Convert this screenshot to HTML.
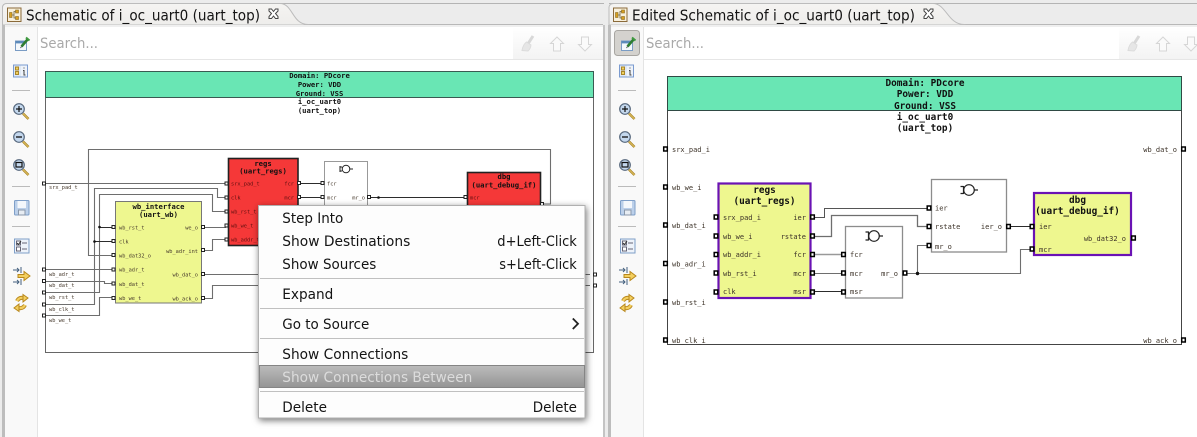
<!DOCTYPE html>
<html><head><meta charset="utf-8"><title>Schematic</title>
<style>
html,body{margin:0;padding:0;width:1197px;height:437px;overflow:hidden;background:#ececec}
svg{display:block}
.t{font-family:"DejaVu Sans","Liberation Sans",sans-serif;fill:#141414}
.b{font-family:"DejaVu Sans Mono","Liberation Mono",monospace;font-weight:bold;fill:#111;text-anchor:middle}
.s{font-family:"DejaVu Sans Mono","Liberation Mono",monospace;font-size:5.3px;fill:#46392c}
.r{font-family:"DejaVu Sans Mono","Liberation Mono",monospace;font-size:7px;fill:#3c3228}
.e{text-anchor:end}
.h{font-size:7.2px}.H{font-size:9.4px}
.w{fill:none;stroke:#6e6e6e;stroke-width:1.1}
.d{fill:none;stroke:#2c2c2c;stroke-width:1}
.g{fill:none;stroke:#999;stroke-width:1.6}
</style></head><body>
<svg xmlns="http://www.w3.org/2000/svg" width="1197" height="437" viewBox="0 0 1197 437">
<defs>
<linearGradient id="hl" x1="0" y1="0" x2="0" y2="1"><stop offset="0" stop-color="#bcbcbc"/><stop offset="1" stop-color="#949494"/></linearGradient>
<linearGradient id="tb" x1="0" y1="0" x2="0" y2="1"><stop offset="0" stop-color="#fff"/><stop offset="1" stop-color="#f3f3f3"/></linearGradient>
<linearGradient id="tab" x1="0" y1="0" x2="0" y2="1"><stop offset="0" stop-color="#f5f4f2"/><stop offset="1" stop-color="#eeedeb"/></linearGradient>
<filter id="sh" x="-10%" y="-10%" width="120%" height="125%"><feDropShadow dx="1" dy="2" stdDeviation="3.5" flood-color="#000" flood-opacity=".55"/></filter>

<g id="p"><rect x="-1.5" y="-1.5" width="3" height="3" fill="#fff" stroke="#222" stroke-width="1"/></g>
<g id="q"><rect x="-1.8" y="-2" width="3.6" height="4" fill="#fff" stroke="#000" stroke-width="1.5"/></g>

<g id="x"><path d="M-4.5-5 L-2-5 L0-2.5 L2-5 L4.5-5 L4.5-3 L2-.5 L4.5 2.5 L4.5 4.5 L2 4.5 L0 2 L-2 4.5 L-4.5 4.5 L-4.5 2.5 L-2-.5 L-4.5-3 Z" fill="#fff" stroke="#444" stroke-width="1"/></g>
<g id="ti"><rect x=".5" y=".5" width="13.500" height="13.500" fill="#f8f0dc" stroke="#8a6a3a"/><rect x="2.500" y="5" width="2.500" height="5" fill="#d8a020" stroke="#8a6a20" stroke-width=".6"/><rect x="8.500" y="2.500" width="3" height="3" fill="#d8a020" stroke="#8a6a20" stroke-width=".6"/><rect x="8.500" y="9" width="3" height="3" fill="#d8a020" stroke="#8a6a20" stroke-width=".6"/><path d="M5 7.500 H7 V4 H8.500 M7 7.500 V10.500 H8.500" stroke="#6a6040" fill="none" stroke-width=".8"/></g>
<g id="ed"><rect x="-6" y="-2.5" width="11" height="9.5" fill="#f4f8fc" stroke="#7a9cc4"/><rect x="-6" y="-2.5" width="11" height="2.4" fill="#5c8aba"/><path d="M0 3 L6-4" stroke="#2f7d32" stroke-width="2.6"/><path d="M4.5-6 L8-3" stroke="#3f9a3f" stroke-width="2"/><path d="M0 3 L-1 4.500" stroke="#555"/></g>
<g id="in"><rect x="-7.500" y="-6" width="14" height="12" fill="#eef3fa" stroke="#7b9bd0"/><rect x="-7" y="-5.500" width="7" height="11" fill="#dfe8f5"/><rect x="-5.500" y="-4" width="3" height="3" fill="#f0d060" stroke="#a8862a"/><rect x="-5.500" y=".5" width="3" height="3" fill="#f0d060" stroke="#a8862a"/><path d="M3-3.500 V-2.500 M2 -.5 H3 V4 H4.500" stroke="#444" fill="none"/></g>
<g id="zb"><path d="M3 3.500 L8.500 9" stroke="#a8862a" stroke-width="2.600"/><path d="M3 3.500 L8.500 9" stroke="#e0c060" stroke-width="1"/><circle cx="-1" cy="-1" r="5.300" fill="#c4d8ee" stroke="#56677c" stroke-width="1.200"/></g>
<g id="sv"><rect x="-7.500" y="-7.500" width="14.500" height="14.500" rx="1" fill="#bcd0ea" stroke="#7f9fc8"/><rect x="-4.500" y="-7" width="8.500" height="7" fill="#f4f7fb"/><rect x="-3.500" y="2" width="6.500" height="5" fill="#e8edf3" stroke="#8a98aa"/></g>
<g id="ls"><rect x="-7.500" y="-7" width="14.500" height="14" fill="#eef3fa" stroke="#7f9fc8"/><rect x="-5.500" y="-5" width="4" height="4" fill="#fff" stroke="#667"/><rect x="-5.500" y="1" width="4" height="4" fill="#fff" stroke="#667"/><path d="M-5-3 L-3.500-1.500 L-1-5" stroke="#333" fill="none"/><path d="M0-3 H5 M0 3 H5" stroke="#667"/></g>
<g id="ar"><path d="M-8-6 H-2 M-4-8 L-2-6 L-4-4 M0-9 V-3 M-8 6 H-2 M-4 4 L-2 6 L-4 8 M0 3 V9" stroke="#44607e" fill="none"/><path d="M-3-1.500 H3 V-4.500 L9 0 L3 4.500 V1.500 H-3 Z" fill="#f3cf5f" stroke="#b8871c"/></g>
<g id="sy"><path d="M-4-2 Q-2-6 3-5 M4 2 Q2 6 -3 5" fill="none" stroke="#b8871c" stroke-width="4"/><path d="M-4-2 Q-2-6 3-5 M4 2 Q2 6 -3 5" fill="none" stroke="#f3cf5f" stroke-width="2.200"/><path d="M2-8.500 L7-5 L2-1 Z M-2 8.500 L-7 5 L-2 1 Z" fill="#f3cf5f" stroke="#b8871c"/></g>
<g id="br"><path d="M-6 7.500 Q-5 1.500 -1.500-1 L3 2 Q2.500 6 0 8 Z" fill="#e6e6e6" stroke="#dcdcdc"/><path d="M.5 0 L5-7" stroke="#d8d8d8" stroke-width="3"/></g>
<g id="up"><path d="M0-7 L6.500-.5 L3.500-.5 L3.500 7 L-3.500 7 L-3.500-.5 L-6.500-.5 Z" fill="#fafafa" stroke="#d6d6d6"/></g>
<g id="dn"><path d="M0 7 L6.500 .5 L3.500 .5 L3.500-7 L-3.500-7 L-3.500 .5 L-6.500 .5 Z" fill="#fafafa" stroke="#d6d6d6"/></g>
</defs>

<!-- window bg -->
<rect width="1197" height="437" fill="#ececec"/>

<!-- LEFT PANE -->
<path d="M2.500 8 Q2.500 3.500 7 3.500 H604" fill="none" stroke="#b4b4b4"/>
<path d="M3 24.500 H603" stroke="#b8b8b8"/>
<path d="M2.500 25 V8 Q2.500 3.500 7 3.500 H280 C293 3.500 292 24.500 308 24.500 H309 V25 H2.500 Z" fill="url(#tab)" stroke="#bcbcbc"/>
<rect x="5" y="25" width="598" height="2" fill="#efefef"/>
<rect x="5" y="27" width="598" height="410" fill="#fff"/>
<rect x="2" y="25" width="3" height="412" fill="#bdbdbd"/>
<rect x="5" y="27" width="32" height="410" fill="#f9f9f9"/>
<rect x="37" y="27" width="1" height="410" fill="#e4e4e4"/>
<rect x="603" y="25" width="2" height="412" fill="#c4c4c4"/>
<rect x="513" y="27" width="90" height="32" fill="url(#tb)"/>
<rect x="38" y="59" width="565" height="1" fill="#e6e6e6"/>
<use href="#ti" x="7" y="7.500"/>
<text class="t" x="26" y="20.500" font-size="15" textLength="234" lengthAdjust="spacingAndGlyphs">Schematic of i_oc_uart0 (uart_top)</text>
<use href="#x" x="273.500" y="14"/>
<text class="t" style="fill:#a9a9a9" x="40" y="48" font-size="14.500" textLength="58" lengthAdjust="spacingAndGlyphs">Search...</text>
<use href="#br" x="528" y="43"/><use href="#up" x="557" y="44"/><use href="#dn" x="585" y="44"/>

<use href="#ed" x="21.500" y="43.500"/><use href="#in" x="21" y="71"/>
<rect x="12" y="90" width="18" height="1" fill="#bbb"/>
<use href="#zb" x="20" y="110"/><path d="M16 109 H22 M19 106 V112" stroke="#111" stroke-width="1.200"/>
<use href="#zb" x="20" y="138"/><path d="M16 137 H22" stroke="#111" stroke-width="1.300"/>
<use href="#zb" x="20" y="166"/><rect x="16" y="162.500" width="6" height="4.500" fill="none" stroke="#111" stroke-width="1.200"/>
<rect x="12" y="186" width="18" height="1" fill="#bbb"/>
<use href="#sv" x="22" y="208"/>
<rect x="12" y="226" width="18" height="1" fill="#bbb"/>
<use href="#ls" x="22" y="246"/>
<use href="#ar" x="21" y="276"/>
<use href="#sy" x="21" y="303"/>

<!-- left schematic -->
<rect x="45.500" y="71.500" width="548" height="281" fill="#fff" stroke="#666"/>
<rect x="45.500" y="71.500" width="548" height="26" fill="#69e6b4" stroke="#3a5a52"/>
<g class="b h">
<text class="b h" x="319.500" y="78">Domain: PDcore</text>
<text class="b h" x="319.500" y="87">Power: VDD</text>
<text class="b h" x="319.500" y="96">Ground: VSS</text>
<text class="b h" x="319.500" y="104">i_oc_uart0</text>
<text class="b h" x="319.500" y="113">(uart_top)</text>
</g>
<path class="w" d="M112 255.500 H88.500 V149.500 H550.500 V204 H543"/>
<path class="w" d="M46 183.500 H226"/>
<path class="w" d="M46 304.500 H94.500 V188.500 H217.500 V197.500 H226"/>
<path class="w" d="M46 292.500 H99.500 V194.500 H212.500 V211.500 H226"/>
<path class="w" d="M46 315.500 H99.500 V297.500 H112"/>
<path class="w" d="M46 281.500 H104.500 V283.500 H112"/>
<path class="w" d="M46 269.500 H112"/>
<path class="d" d="M99.500 227.500 H112 M94.500 241.500 H112"/>
<circle cx="99.500" cy="227" r="1.300" fill="#111"/><circle cx="94.500" cy="241.500" r="1.300" fill="#111"/>
<path class="w" d="M203 227.500 H226 M203 250.500 H212.500 V239.500 H226 M203 274.500 H590 M203 298.500 H212.500 V285.500 H590"/>
<path class="d" d="M300 183.500 H322 M300 197.500 H322 M370 197.500 H465"/>
<circle cx="378.500" cy="197.500" r="1.300" fill="#111"/>

<rect x="228.500" y="158.500" width="69.500" height="87" fill="#f53838" stroke="#222" stroke-width="1.600"/>
<text class="b" font-size="7.200" x="263" y="166">regs</text><text class="b" font-size="7.200" x="263" y="173.500">(uart_regs)</text>
<g class="s" style="fill:#5c1010">
<text x="231" y="185.500">srx_pad_t</text><text x="231" y="199.500">clk</text><text x="231" y="213.500">wb_rst_t</text><text x="231" y="227.500">wb_we_t</text><text x="231" y="241.500">wb_addr_t</text>
<text x="294" y="185.500" class="e">fcr</text><text x="294" y="199.500" class="e">mcr</text>
</g>
<rect x="115.500" y="201.500" width="86" height="101.500" fill="#eef78f" stroke="#777"/>
<text class="b" font-size="7.200" x="158.500" y="209">wb_interface</text><text class="b" font-size="7.200" x="158.500" y="217">(uart_wb)</text>
<g class="s">
<text x="119" y="229.500">wb_rst_t</text><text x="119" y="243.500">clk</text><text x="119" y="257.500">wb_dat32_o</text><text x="119" y="271.500">wb_adr_t</text><text x="119" y="286">wb_dat_t</text><text x="119" y="300">wb_we_t</text>
<text x="198" y="229.500" class="e">we_o</text><text x="198" y="253" class="e">wb_adr_int</text><text x="198" y="276.500" class="e">wb_dat_o</text><text x="198" y="300.500" class="e">wb_ack_o</text>
<text x="49" y="189">srx_pad_t</text><text x="49" y="276">wb_adr_t</text><text x="49" y="287">wb_dat_t</text><text x="49" y="299">wb_rst_t</text><text x="49" y="311">wb_clk_t</text><text x="49" y="322">wb_we_t</text>
</g>
<rect x="324.500" y="161.500" width="43" height="60" fill="#fff" stroke="#999"/>
<circle cx="346" cy="169" r="3.800" fill="#fff" stroke="#222"/><path d="M340 167 H342 M340 171 H342 M350 169 H353 M340 166 V172" stroke="#222" fill="none"/>
<g class="s"><text x="327" y="185.500">fcr</text><text x="327" y="199.500">mcr</text><text x="365" y="199.500" class="e">mr_o</text></g>
<rect x="467.500" y="172.500" width="73" height="50" fill="#f53838" stroke="#222" stroke-width="1.600"/>
<text class="b" font-size="7.200" x="504" y="179">dbg</text><text class="b" font-size="7.200" x="504" y="187.500">(uart_debug_if)</text>
<text class="s" style="fill:#5c1010" x="470" y="199.500">mcr</text>
<g fill="#fff">
<use href="#p" x="44" y="183.500"/><use href="#p" x="44" y="269.500"/><use href="#p" x="44" y="281"/><use href="#p" x="44" y="292.500"/><use href="#p" x="44" y="304.500"/><use href="#p" x="44" y="315.500"/>
<use href="#p" x="226.500" y="183.500"/><use href="#p" x="226.500" y="197.500"/><use href="#p" x="226.500" y="211.500"/><use href="#p" x="226.500" y="225.500"/><use href="#p" x="226.500" y="239.500"/>
<use href="#p" x="299" y="183"/><use href="#p" x="299" y="197"/>
<use href="#p" x="322.500" y="183"/><use href="#p" x="322.500" y="197"/><use href="#p" x="369" y="197"/>
<use href="#p" x="465.500" y="197"/><use href="#p" x="542" y="204"/>
<use href="#p" x="113.500" y="227"/><use href="#p" x="113.500" y="241"/><use href="#p" x="113.500" y="255"/><use href="#p" x="113.500" y="269.500"/><use href="#p" x="113.500" y="283.500"/><use href="#p" x="113.500" y="298"/>
<use href="#p" x="203" y="227"/><use href="#p" x="203" y="250"/><use href="#p" x="203" y="274"/><use href="#p" x="203" y="298"/>
<use href="#p" x="595" y="274.500"/><use href="#p" x="595" y="285.500"/>
</g>

<!-- RIGHT PANE -->
<path d="M609 3.500 H1197" stroke="#b4b4b4"/>
<path d="M609 24.500 H1197" stroke="#b8b8b8"/>
<path d="M609 25 V8 Q609 3.500 614 3.500 H933 C946 3.500 948 24.500 964 24.500 H965 V25 H609 Z" fill="url(#tab)" stroke="#bcbcbc"/>
<rect x="611" y="25" width="586" height="2" fill="#efefef"/>
<rect x="611" y="27" width="586" height="410" fill="#fff"/>
<rect x="608" y="25" width="3" height="412" fill="#bdbdbd"/>
<rect x="611" y="27" width="32" height="410" fill="#f9f9f9"/>
<rect x="643" y="27" width="1" height="410" fill="#e4e4e4"/>
<rect x="1119" y="27" width="78" height="32" fill="url(#tb)"/>
<rect x="644" y="59" width="553" height="1" fill="#e6e6e6"/>
<rect x="614.500" y="30.500" width="25" height="25" rx="3" fill="#d4d2ce" stroke="#a8a6a2"/>
<use href="#ti" x="613" y="7.500"/>
<text class="t" x="632" y="20.500" font-size="15" textLength="283" lengthAdjust="spacingAndGlyphs">Edited Schematic of i_oc_uart0 (uart_top)</text>
<use href="#x" x="928.500" y="14"/>
<text class="t" style="fill:#a9a9a9" x="646" y="48" font-size="14.500" textLength="58" lengthAdjust="spacingAndGlyphs">Search...</text>
<use href="#br" x="1134" y="43"/><use href="#up" x="1163" y="44"/><use href="#dn" x="1191" y="44"/>

<use href="#ed" x="627.500" y="43.500"/><use href="#in" x="627" y="71"/>
<rect x="618" y="90" width="18" height="1" fill="#bbb"/>
<use href="#zb" x="626" y="110"/><path d="M622 109 H628 M625 106 V112" stroke="#111" stroke-width="1.200"/>
<use href="#zb" x="626" y="138"/><path d="M622 137 H628" stroke="#111" stroke-width="1.300"/>
<use href="#zb" x="626" y="166"/><rect x="622" y="162.500" width="6" height="4.500" fill="none" stroke="#111" stroke-width="1.200"/>
<rect x="618" y="186" width="18" height="1" fill="#bbb"/>
<use href="#sv" x="628" y="208"/>
<rect x="618" y="226" width="18" height="1" fill="#bbb"/>
<use href="#ls" x="628" y="246"/>
<use href="#ar" x="627" y="276"/>
<use href="#sy" x="627" y="303"/>

<!-- right schematic -->
<rect x="667.500" y="76.500" width="514" height="268" fill="#fff" stroke="#444"/>
<rect x="667.500" y="76.500" width="514" height="34" fill="#69e6b4" stroke="#2f4a44"/>
<text class="b H" x="925" y="86">Domain: PDcore</text>
<text class="b H" x="925" y="97">Power: VDD</text>
<text class="b H" x="925" y="109">Ground: VSS</text>
<text class="b H" x="925" y="120">i_oc_uart0</text>
<text class="b H" x="925" y="131">(uart_top)</text>
<g class="r">
<text x="672" y="152">srx_pad_i</text><text x="672" y="190">wb_we_i</text><text x="672" y="228">wb_dat_i</text><text x="672" y="266.500">wb_adr_i</text><text x="672" y="305">wb_rst_i</text><text x="672" y="343">wb_clk_i</text>
<text x="1177" y="152" class="e">wb_dat_o</text><text x="1177" y="343" class="e">wb_ack_o</text>
</g>
<path class="d" d="M812 217.500 H824.500 V208.500 H929" style="stroke:#555"/>
<path class="w" d="M812 236.500 H831.500 V215.500 H917.500 V226.500 H929" style="stroke-width:1.300"/>
<path class="g" d="M812 254.500 H843"/>
<path class="w" d="M812 273.500 H843"/>
<path class="d" d="M812 291.500 H843"/>
<path class="w" d="M906 273.500 H1020.500 V249.500 H1031"/>
<path class="w" d="M917.500 273.500 V245.500 H929"/>
<circle cx="917.500" cy="273.500" r="1.700" fill="#111"/>
<path class="d" d="M1009 226.500 H1031"/>

<rect x="718.500" y="183.500" width="92" height="114.500" fill="#eef78f" stroke="#6a12b4" stroke-width="2.200"/>
<text class="b H" x="764.500" y="193">regs</text><text class="b H" x="764.500" y="204">(uart_regs)</text>
<g class="r">
<text x="723" y="220">srx_pad_i</text><text x="723" y="239">wb_we_i</text><text x="723" y="257">wb_addr_i</text><text x="723" y="276">wb_rst_i</text><text x="723" y="294">clk</text>
<text x="806" y="220" class="e">ier</text><text x="806" y="239" class="e">rstate</text><text x="806" y="257" class="e">fcr</text><text x="806" y="276" class="e">mcr</text><text x="806" y="294" class="e">msr</text>
</g>
<rect x="845.500" y="226.500" width="57" height="71.500" fill="#fff" stroke="#8c8c8c" stroke-width="1.300"/>
<circle cx="874" cy="236" r="5.300" fill="#fff" stroke="#222" stroke-width="1.200"/><path d="M865.500 232 H868.500 M865.500 240 H868.500 M879.500 236 H883 M868.500 231.500 V240.500" stroke="#222" fill="none" stroke-width="1.200"/>
<g class="r"><text x="850" y="257">fcr</text><text x="850" y="276">mcr</text><text x="850" y="294">msr</text><text x="898" y="276" class="e">mr_o</text></g>
<rect x="931.500" y="179.500" width="75" height="72.500" fill="#fff" stroke="#8c8c8c" stroke-width="1.300"/>
<circle cx="969" cy="190" r="5.300" fill="#fff" stroke="#222" stroke-width="1.200"/><path d="M960.500 186.500 H963.500 M960.500 193.500 H963.500 M974.500 190 H978 M963.500 186 V194" stroke="#222" fill="none" stroke-width="1.200"/>
<g class="r"><text x="935" y="210.500">ier</text><text x="935" y="229">rstate</text><text x="935" y="249">mr_o</text><text x="1002" y="229" class="e">ier_o</text></g>
<rect x="1034" y="193" width="97" height="62" fill="#eef78f" stroke="#6a12b4" stroke-width="2.200"/>
<text class="b H" x="1077.500" y="203">dbg</text><text class="b H" x="1077.500" y="214">(uart_debug_if)</text>
<g class="r"><text x="1039" y="229">ier</text><text x="1039" y="252">mcr</text><text x="1126" y="241" class="e">wb_dat32_o</text></g>
<use href="#q" x="665.500" y="149"/><use href="#q" x="665.500" y="187"/><use href="#q" x="665.500" y="225"/><use href="#q" x="665.500" y="263.500"/><use href="#q" x="665.500" y="302"/><use href="#q" x="665.500" y="340"/>
<use href="#q" x="1183.500" y="149"/><use href="#q" x="1183.500" y="340"/>
<use href="#q" x="716" y="217"/><use href="#q" x="716" y="236"/><use href="#q" x="716" y="254.500"/><use href="#q" x="716" y="273"/><use href="#q" x="716" y="292"/>
<use href="#q" x="812.500" y="217"/><use href="#q" x="812.500" y="236"/><use href="#q" x="812.500" y="254.500"/><use href="#q" x="812.500" y="273"/><use href="#q" x="812.500" y="292"/>
<use href="#q" x="843.500" y="254.500"/><use href="#q" x="843.500" y="273"/><use href="#q" x="843.500" y="292"/><use href="#q" x="905" y="273"/>
<use href="#q" x="929" y="208"/><use href="#q" x="929" y="226.500"/><use href="#q" x="929" y="245.500"/><use href="#q" x="1008.500" y="226.500"/>
<use href="#q" x="1032" y="226.500"/><use href="#q" x="1032" y="249"/><use href="#q" x="1133.500" y="238"/>

<!-- CONTEXT MENU -->
<rect x="258.500" y="205.500" width="326.500" height="212.500" fill="#fdfdfd" stroke="#b0b0b0" filter="url(#sh)"/>
<g fill="#c0c0c0">
<rect x="260" y="278" width="324" height="1"/><rect x="260" y="308" width="324" height="1"/><rect x="260" y="338" width="324" height="1"/><rect x="260" y="391" width="324" height="1"/>
</g>
<rect x="259.500" y="365.500" width="325" height="22" fill="url(#hl)" stroke="#858585"/>
<text class="t" x="282.300" y="223" font-size="14.500" textLength="61" lengthAdjust="spacingAndGlyphs">Step Into</text>
<text class="t" x="282.300" y="246" font-size="14.500" textLength="128" lengthAdjust="spacingAndGlyphs">Show Destinations</text>
<text class="t" x="282.300" y="269" font-size="14.500" textLength="94" lengthAdjust="spacingAndGlyphs">Show Sources</text>
<text class="t" x="282.300" y="299" font-size="14.500" textLength="51" lengthAdjust="spacingAndGlyphs">Expand</text>
<text class="t" x="282.300" y="329" font-size="14.500" textLength="87" lengthAdjust="spacingAndGlyphs">Go to Source</text>
<text class="t" x="282.300" y="359" font-size="14.500" textLength="126" lengthAdjust="spacingAndGlyphs">Show Connections</text>
<text class="t" style="fill:#dcdcdc" x="282.300" y="382" font-size="14.500" textLength="190" lengthAdjust="spacingAndGlyphs">Show Connections Between</text>
<text class="t" x="282.300" y="412" font-size="14.500" textLength="44.700" lengthAdjust="spacingAndGlyphs">Delete</text>
<text class="t" x="497.300" y="246" font-size="14.500" textLength="79.500" lengthAdjust="spacingAndGlyphs">d+Left-Click</text>
<text class="t" x="499.300" y="269" font-size="14.500" textLength="77.500" lengthAdjust="spacingAndGlyphs">s+Left-Click</text>
<text class="t" x="532.700" y="412" font-size="14.500" textLength="44.300" lengthAdjust="spacingAndGlyphs">Delete</text>
<path d="M572.800 318.500 L578 323.700 L572.800 329" fill="none" stroke="#222" stroke-width="1.800"/>
</svg>
</body></html>
